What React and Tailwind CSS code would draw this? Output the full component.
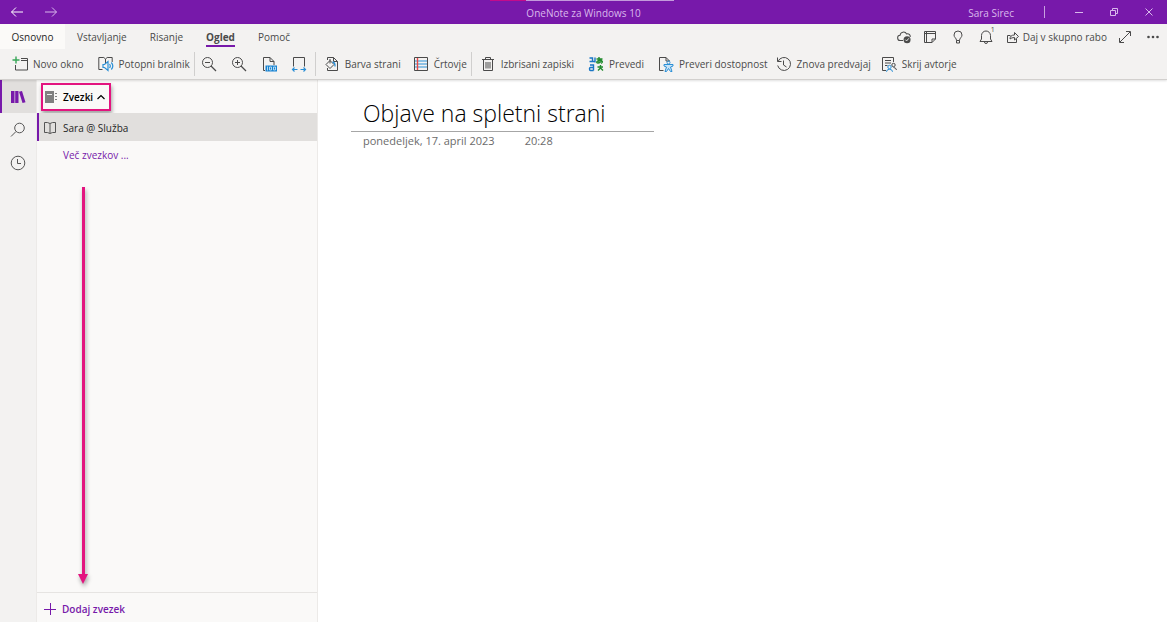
import React from 'react';

function Icon({ className = 'size-4', box = '0 0 16 16', children }) {
  return (
    <svg viewBox={box} className={`shrink-0 ${className}`} fill="none" stroke="currentColor" aria-hidden="true">
      {children}
    </svg>
  );
}

const BLUE = '#2b8fd6';

function NewWindowIcon() {
  return (
    <Icon>
      <path d="M9 2.500h6.500v11.500h-12V9M9 4.500h6.500" />
      <path d="M4 .5v7M.5 4h7" stroke="#36a657" strokeWidth="1.400" />
    </Icon>
  );
}

function ReaderIcon() {
  return (
    <Icon>
      <path d="M4.500 13.500H.8v-12h5L7.500 3v5M7.500 3l1.700-1.500h5V6" />
      <path d="M5 8.500h1.500l3.500-3v9l-3.500-3H5zM11.500 8q1.600 2 0 4M13.300 6.500q3 3.500 0 7" stroke={BLUE} strokeWidth="1.200" />
    </Icon>
  );
}

function ZoomIcon({ plus }) {
  return (
    <Icon>
      <circle cx="6.500" cy="6.500" r="5" />
      <path d="m10 10 5 5" strokeWidth="1.200" />
      <path d="M4 6.500h5" />
      {plus && <path d="M6.500 4v5" />}
    </Icon>
  );
}

function ActualSizeIcon() {
  return (
    <Icon>
      <path d="M4 14.500H2.500v-13h6.500l4 4V9M9 1.500v4h4" />
      <path d="M4.500 9.500H16V15.500H4.500z" fill="#1683d2" stroke="none" />
      <path d="M6.500 10.500v4M8.500 11h2v3h-2zM12.500 11h2v3h-2z" stroke="#d8ecf8" strokeWidth=".8" />
    </Icon>
  );
}

function PageWidthIcon() {
  return (
    <Icon>
      <path d="M2.500 10.500V1.500h11v9" />
      <path d="M1.500 13.500h5M9.500 13.500h5M3.500 11.500l-2 2 2 2M12.500 11.500l2 2-2 2" stroke={BLUE} strokeWidth="1.200" />
    </Icon>
  );
}

function PageColorIcon() {
  return (
    <Icon>
      <path d="M3.500 4V1.500h6l4 4v9h-10V12M9.500 1.500v4h4" />
      <path d="m6 4.500 4 4-4 4-4-4zM6 3v4.500" />
      <path d="M8.500 6q2.800.5 2.500 4.500" stroke={BLUE} strokeWidth="1.300" />
    </Icon>
  );
}

function RuleLinesIcon() {
  return (
    <Icon>
      <path d="M1.500 5h13M1.500 8h13M1.500 11h13" stroke={BLUE} strokeWidth="1.200" />
      <path d="M1.500 1.500h13v13h-13z" />
      <path d="M4.500 2v12" stroke="#e84848" strokeWidth="1.400" />
    </Icon>
  );
}

function TrashIcon() {
  return (
    <Icon>
      <path d="M2 3.500h12M5.500 3.500v-2h5v2M3.500 3.500v11h9v-11M6 6v6.500M8 6v6.500M10 6v6.500" />
    </Icon>
  );
}

function TranslateIcon() {
  return (
    <Icon>
      <g stroke="#1976c5" strokeWidth="1.400">
        <path d="M1.500 2h3v4M1.500 5.500h5M7 1.500v5M2 9h3.500v5.500M5.500 11.500h-3q-1 0-1 1.500t1 1.500h3" />
      </g>
      <g stroke="#218b2d" strokeWidth="1.400">
        <path d="M8.500 3h6M11 1v6M13.500 4q-1 3-3.500 3-1.800 0-1-1.500 2-2 4.500-1 2 1.500-.5 3" />
        <path d="M9.500 11h5.500M12.500 9v3l-2.500 2.500M12.500 12l2.500 2.500" />
      </g>
    </Icon>
  );
}

function AccessibilityIcon() {
  return (
    <Icon>
      <path d="M5.500 14.500h-4v-13H8l3.500 3.500M8 1.500V5h3.500" />
      <circle cx="10.500" cy="6.500" r="1.500" stroke={BLUE} />
      <path d="M6 8.500h9v1.500l-2.500 1 1.500 4.500h-1.500l-2-3-2 3H7L8.500 11 6 10z" stroke={BLUE} fill="#c8e3f6" />
    </Icon>
  );
}

function ReplayIcon() {
  return (
    <Icon>
      <path d="M1.500 1.500v4h4M2 5.500a6.500 6.500 0 1 1-.3 4M7.500 4.500V9l3 2" />
    </Icon>
  );
}

function HideAuthorsIcon() {
  return (
    <Icon>
      <path d="M5 14.500H1.500v-13h11V6M4 4.500h6M4 7h6M4 9.500h2.500" />
      <circle cx="12.500" cy="9" r="1.700" />
      <path d="M12.500 11.500q2.500 0 3 2.500" />
      <circle cx="8.500" cy="11" r="1.700" stroke={BLUE} />
      <path d="M5.500 15.800q0-2.500 3-2.500t3 2.500" stroke={BLUE} />
    </Icon>
  );
}

function Tool({ icon, children, className = '' }) {
  return (
    <button type="button" className={`flex h-6 items-center gap-[5px] whitespace-nowrap ${className}`}>
      {icon}
      {children}
    </button>
  );
}

function TitleBar() {
  return (
    <header className="relative grid h-6 grid-cols-3 items-center bg-[#7719aa] text-[10px] text-[#d9b8ec]">
      <div className="absolute top-0 left-[42%] flex h-px w-46">
        <span className="w-9 bg-[#c30b8b]" />
        <span className="grow bg-[#c39bdc]" />
      </div>
      <div className="flex gap-5 pl-2.5">
        <button type="button" aria-label="Nazaj" className="text-white">
          <Icon className="h-3 w-3.5" box="0 0 14 12"><path d="M13 6H1.500M6 1.500 1.500 6 6 10.500" /></Icon>
        </button>
        <button type="button" aria-label="Naprej">
          <Icon className="h-3 w-3.5" box="0 0 14 12"><path d="M1 6h11.500M8 1.500 12.500 6 8 10.500" /></Icon>
        </button>
      </div>
      <h1 className="pt-0.5 text-center">OneNote za Windows 10</h1>
      <div className="flex items-center justify-end pr-3.5">
        <span className="mr-7.5 pt-0.5">Sara Sirec</span>
        <span className="mr-7.5 h-3 w-px bg-[#c9a1e0]" />
        <button type="button" aria-label="Pomanjšaj" className="mr-[27px]">
          <Icon className="size-2" box="0 0 8 8"><path d="M0 4.500h8" /></Icon>
        </button>
        <button type="button" aria-label="Obnovi" className="mr-[27px]">
          <Icon className="size-2" box="0 0 8 8"><path d="M.5 2.500h5v5h-5zM2.500 2V.5h5v5H6" /></Icon>
        </button>
        <button type="button" aria-label="Zapri">
          <Icon className="size-2" box="0 0 8 8"><path d="m.5.5 7 7m0-7-7 7" /></Icon>
        </button>
      </div>
    </header>
  );
}

function TabBar() {
  return (
    <div className="flex h-[25px] items-stretch justify-between">
      <nav className="flex items-stretch">
        <button type="button" className="w-[65px] bg-[#fbfaf8] text-[#262626]">Osnovno</button>
        <button type="button" className="ml-3">Vstavljanje</button>
        <button type="button" className="ml-[23px]">Risanje</button>
        <button type="button" aria-current="page" className="mb-0.5 ml-[23px] border-b-2 border-[#7719aa] pt-1 font-bold">Ogled</button>
        <button type="button" className="ml-[23px]">Pomoč</button>
      </nav>
      <div className="flex items-center pr-2">
        <button type="button" aria-label="Sinhronizirano" className="mr-3">
          <Icon className="size-3.5">
            <path d="M7 12H4a3 3 0 0 1-.5-6 4 4 0 0 1 7.500-1.500A3 3 0 0 1 15 8" strokeWidth="1.200" />
            <circle cx="11.500" cy="11" r="4" fill="currentColor" stroke="none" />
            <path d="m9.500 11 1.500 1.500 2.500-3" stroke="#fff" />
          </Icon>
        </button>
        <button type="button" aria-label="Samolepilni listki" className="mr-3.5">
          <Icon className="size-3.5" box="0 0 14 14"><path d="M1.500 1.500h11v7.500l-3.500 3.500H1.500zM12.500 9H9v3.500M3.500 2v10M1.500 3.500h11" /></Icon>
        </button>
        <button type="button" aria-label="Namigi" className="mr-3.5">
          <Icon className="size-3.5" box="0 0 14 14"><path d="M5.500 10.500C5.500 8 3 7.500 3 5a4 4 0 0 1 8 0c0 2.500-2.500 3-2.500 5.500zM5.500 10.500v2.500h3v-2.500" /></Icon>
        </button>
        <button type="button" aria-label="Obvestila, 1" className="mr-3 flex items-start">
          <Icon className="size-3.5" box="0 0 14 14"><path d="M1 11.500h12L11.500 9V5.500a4.500 4.500 0 0 0-9 0V9zM5.500 12a1.500 1.500 0 0 0 3 0" /></Icon>
          <span className="-mt-1 -ml-0.5 w-1 text-[7px] leading-2">1</span>
        </button>
        <button type="button" className="mr-3 flex items-center gap-1 whitespace-nowrap">
          <Icon className="size-3" box="0 0 12 12"><path d="M3.500 4.500h-3v7h9V8M3 8q0-4 4.500-4V1.500l4 4-4 3.500V6.500Q4.500 6.500 3 8z" /></Icon>
          Daj v skupno rabo
        </button>
        <button type="button" aria-label="Celozaslonski način" className="mr-4">
          <Icon className="size-3" box="0 0 12 12"><path d="m1 11 10-10M7 .5h4.500V5M.5 7v4.500H5" /></Icon>
        </button>
        <button type="button" aria-label="Več možnosti">
          <Icon className="h-3 w-3" box="0 0 12 12"><g fill="currentColor" stroke="none"><circle cx="1.500" cy="6" r="1.300" /><circle cx="6" cy="6" r="1.300" /><circle cx="10.500" cy="6" r="1.300" /></g></Icon>
        </button>
      </div>
    </div>
  );
}

function Ribbon() {
  const divider = <span className="h-6 w-px shrink-0 bg-[#d0cfce]" />;
  return (
    <div className="flex h-[30px] items-center pl-3">
      <Tool icon={<NewWindowIcon />} className="mr-3.5">Novo okno</Tool>
      <Tool icon={<ReaderIcon />} className="mr-1">Potopni bralnik</Tool>
      {divider}
      <button type="button" aria-label="Pomanjšaj pogled" className="ml-1.5"><ZoomIcon /></button>
      <button type="button" aria-label="Povečaj pogled" className="ml-3.5"><ZoomIcon plus /></button>
      <button type="button" aria-label="100 odstotkov" className="ml-3.5"><ActualSizeIcon /></button>
      <button type="button" aria-label="Širina strani" className="mr-2 ml-3.5"><PageWidthIcon /></button>
      {divider}
      <Tool icon={<PageColorIcon />} className="mr-3 ml-2">Barva strani</Tool>
      <Tool icon={<RuleLinesIcon />} className="mr-1">Črtovje</Tool>
      {divider}
      <Tool icon={<TrashIcon />} className="mr-3.5 ml-2">Izbrisani zapiski</Tool>
      <Tool icon={<TranslateIcon />} className="mr-3.5">Prevedi</Tool>
      <Tool icon={<AccessibilityIcon />} className="mr-2">Preveri dostopnost</Tool>
      <Tool icon={<ReplayIcon />} className="mr-2.5">Znova predvajaj</Tool>
      <Tool icon={<HideAuthorsIcon />}>Skrij avtorje</Tool>
    </div>
  );
}

function Rail() {
  return (
    <nav className="flex w-9 shrink-0 flex-col bg-[#f3f2f1] text-[#555]">
      <button type="button" aria-label="Zvezki" className="flex h-[33px] items-center border-l-2 border-[#7719aa] bg-[#e1dfdd] pl-2 text-[#7719aa]">
        <Icon className="h-4 w-4">
          <g fill="currentColor" stroke="none"><path d="M1 2h3.500v12H1zM5.200 2h3.300v12H5.200zM9 2.800l3-.8 3.500 11.300-3 .8z" /></g>
        </Icon>
      </button>
      <button type="button" aria-label="Iskanje" className="flex h-[33px] items-center justify-center">
        <Icon className="size-4"><circle cx="9.500" cy="6" r="4.800" /><path d="m6 9.500-5 5" /></Icon>
      </button>
      <button type="button" aria-label="Nedavno" className="flex h-[33px] items-center justify-center">
        <Icon className="size-4"><circle cx="8" cy="8" r="6.800" /><path d="M7.500 4v4.500H11" /></Icon>
      </button>
    </nav>
  );
}

function Sidebar() {
  return (
    <aside className="flex w-[282px] shrink-0 flex-col border-x border-[#eceae8] bg-[#faf9f8]">
      <div className="flex h-[33px] items-center pl-1">
        <button type="button" aria-expanded="true" className="flex h-7 w-[70px] items-center border-2 border-[#e3147f] pl-0.5 font-semibold text-black shadow-[1px_3px_4px_rgba(0,0,0,0.35)]">
          <Icon className="mr-1.5 size-3 text-[#808080]" box="0 0 12 12">
            <path d="M0 0h9v12H0z" fill="currentColor" stroke="none" /><path d="M2 3.500h5" stroke="#eee" /><path d="M10 2.500h2M10 5.500h2M10 8.500h2" />
          </Icon>
          Zvezki
          <Icon className="ml-1 size-2" box="0 0 8 8"><path d="m.5 6 3.500-3.500L7.500 6" strokeWidth="1.200" /></Icon>
        </button>
      </div>
      <button type="button" className="flex h-7 items-center gap-1.5 border-l-2 border-[#7719aa] bg-[#e1dfdd] pt-px pl-1 text-[#262626]">
        <Icon className="h-3 w-3.5 text-[#555]" box="0 0 14 12"><path d="M7 1.500Q4.500 0 1.500 .5v10q3-.5 5.500 1 2.500-1.500 5.500-1v-10Q9.500 0 7 1.500zM7 1.500v10" /></Icon>
        Sara @ Služba
      </button>
      <a href="#zvezki" className="flex h-7 items-center pl-[26px] text-[#7719aa]">Več zvezkov ...</a>
      <div className="mt-4.5 ml-10 flex min-h-[380px] grow pb-2">
        <div className="flex w-3 flex-col items-center drop-shadow-[1px_3px_2px_rgba(0,0,0,0.35)]">
          <span className="w-[3px] grow bg-[#e3147f]" />
          <Icon className="h-2.5 w-2.5 text-[#e3147f]" box="0 0 10 10"><path d="M0 0h10L5 10z" fill="currentColor" stroke="none" /></Icon>
        </div>
      </div>
      <button type="button" className="flex h-[30px] items-center gap-1.5 border-t border-[#e6e4e2] pt-0.5 pl-[7px] font-semibold text-[#7719aa]">
        <Icon className="size-3" box="0 0 12 12"><path d="M6.500 0v12M0 6.500h12" /></Icon>
        Dodaj zvezek
      </button>
    </aside>
  );
}

export default function App() {
  return (
    <div className="flex min-h-screen flex-col bg-white font-['Open_Sans','Noto_Sans',sans-serif] text-[10px] leading-4 text-[#4a4a4a]">
      <TitleBar />
      <div className="relative border-b border-[#d2d0ce] bg-[#f3f2f1] shadow-[0_1px_2px_rgba(0,0,0,0.12)]">
        <TabBar />
        <Ribbon />
      </div>
      <div className="flex grow">
        <Rail />
        <Sidebar />
        <main className="grow pt-[15px] pl-[33px]">
          <div className="w-[303px] border-b border-[#a6a6a6] pl-3">
            <h2 className="h-9 text-[23px] leading-9 font-light whitespace-nowrap text-black">Objave na spletni strani</h2>
          </div>
          <div className="flex gap-[30px] pl-3 text-[11px] leading-[18px] text-[#6b6b6b]">
            <span>ponedeljek, 17. april 2023</span>
            <span>20:28</span>
          </div>
        </main>
      </div>
    </div>
  );
}
